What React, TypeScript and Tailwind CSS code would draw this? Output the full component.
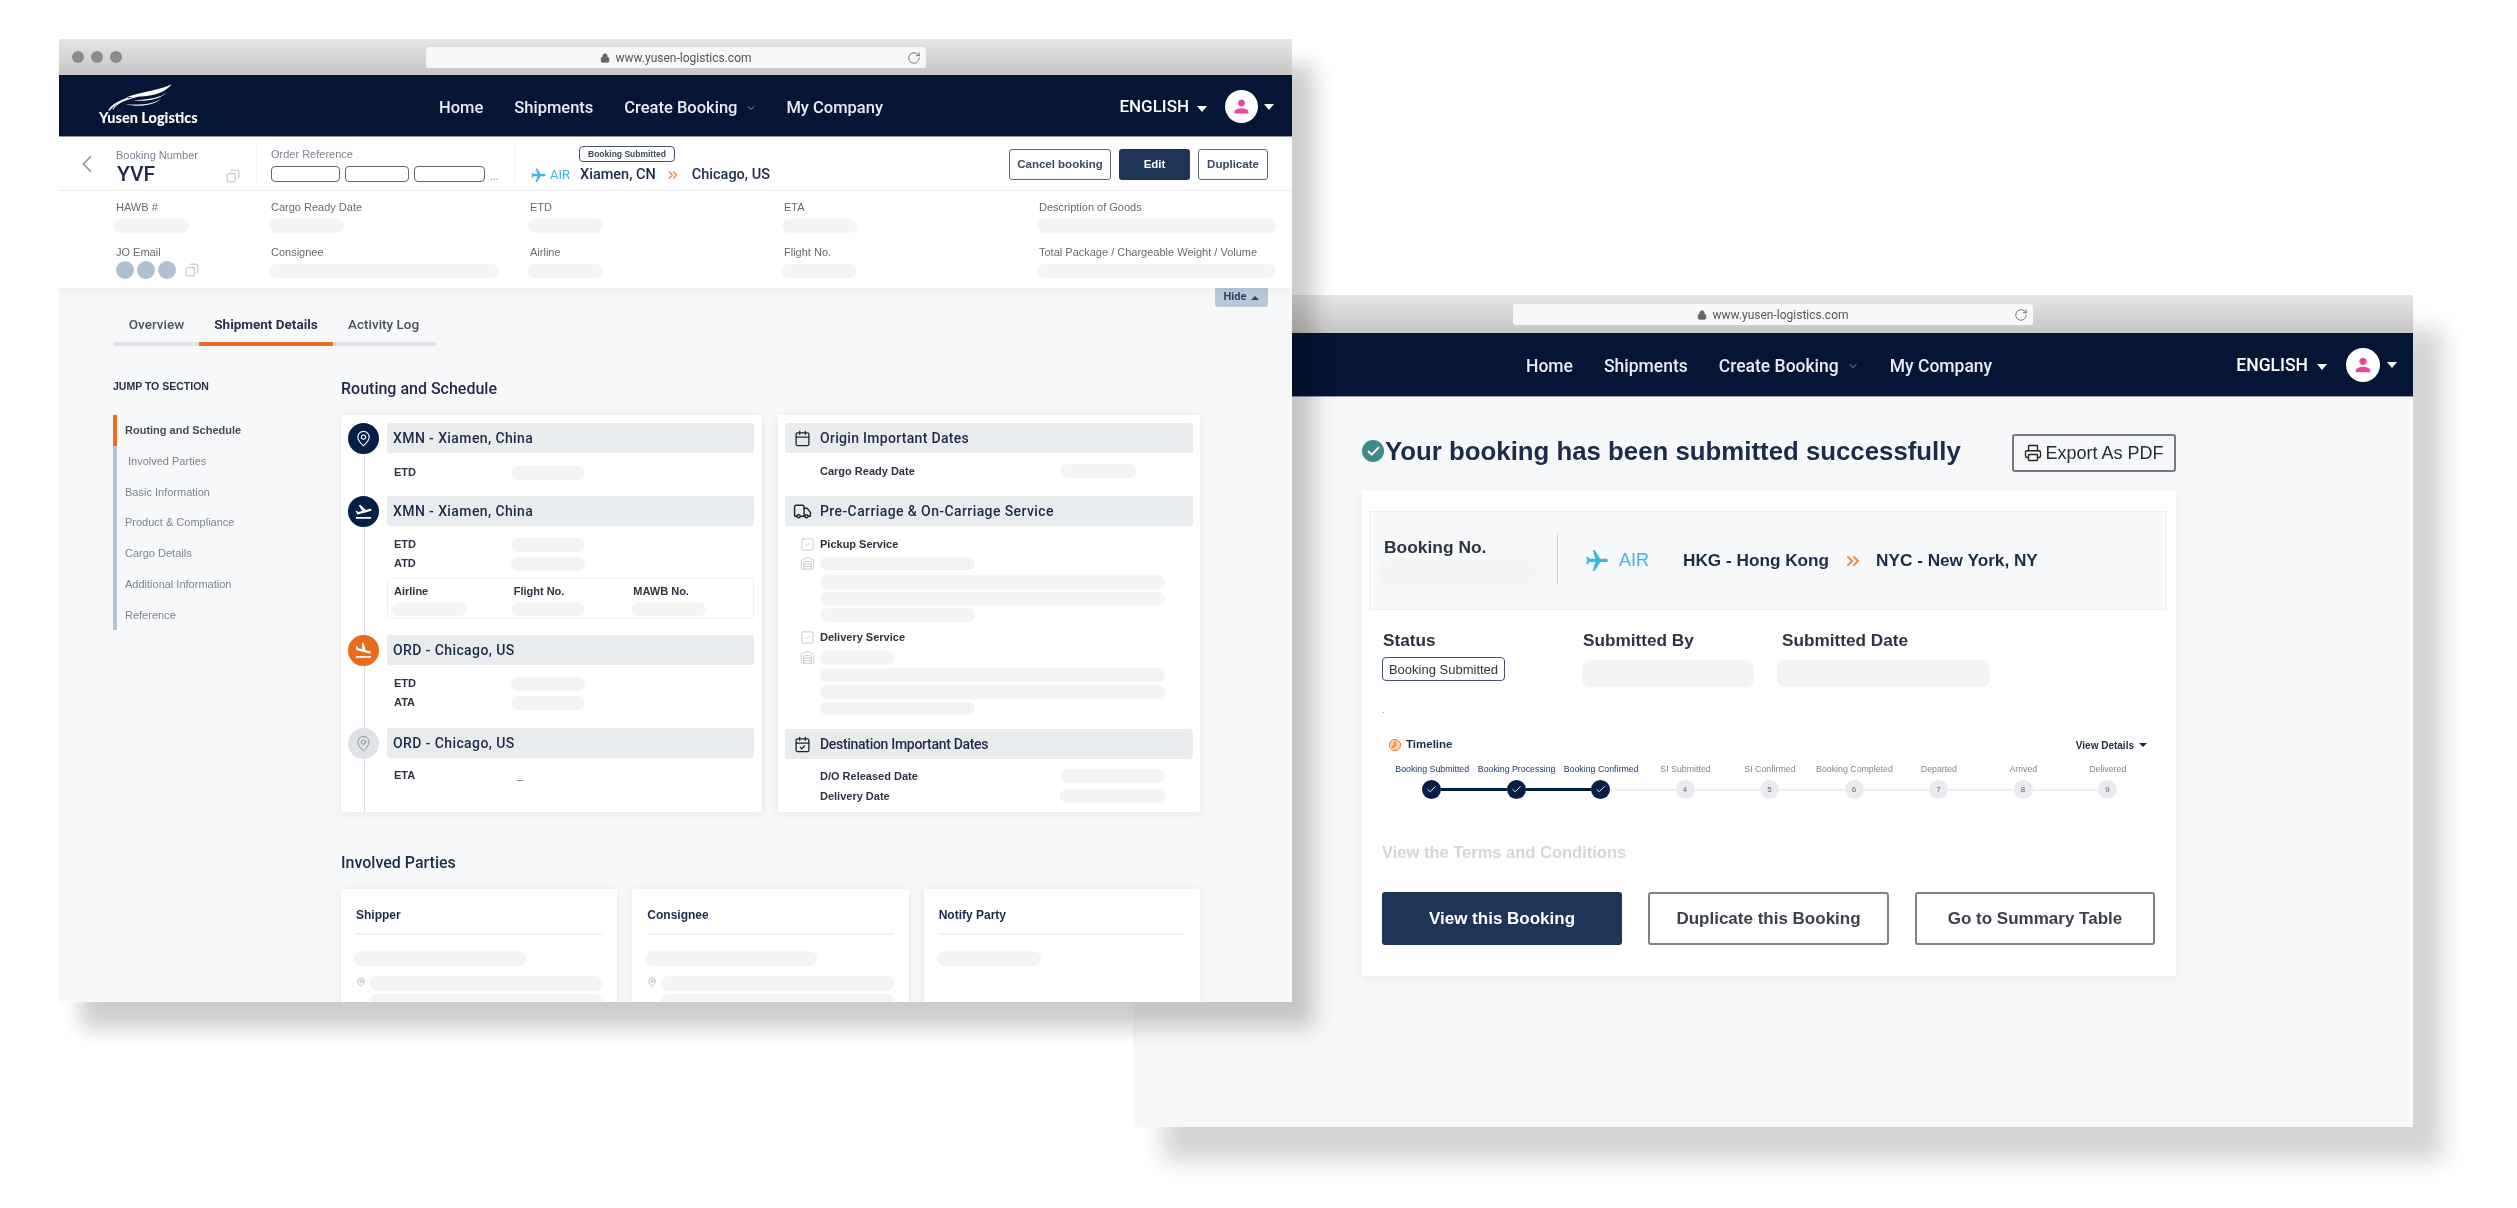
import React from "react";
import { ChevronDown, ChevronLeft, ChevronsRight, Copy, Lock, RotateCw, MapPin, Calendar, CalendarCheck, Truck, SquareCheck, Warehouse, Printer, Check } from "lucide-react";
import { MdFlight, MdFlightLand, MdFlightTakeoff, MdPerson } from "react-icons/md";

const Skel = ({ className = "" }: { className?: string }) => <div className={"rounded-lg bg-[#f4f4f5] shrink-0 " + className} />;
const CaretW = () => <span className="inline-block w-0 h-0 border-x-[5px] border-x-transparent border-t-[6px] border-t-white" />;
const CaretD = ({ className = "" }: { className?: string }) => <span className={"inline-block w-0 h-0 border-x-[4px] border-x-transparent border-t-[4px] border-t-[#12264a] " + className} />;

function Chrome({ h, dots, ml, w }: { h: string; dots: boolean; ml: string; w: string }) {
  return (
    <div className={"flex items-center bg-gradient-to-b from-[#e6e6e4] to-[#c6c7c4] shrink-0 " + h}>
      {dots && (
        <div className="flex gap-[7px] pl-[13px]">
          <span className="w-3 h-3 rounded-full bg-[#8b8b8b]" />
          <span className="w-3 h-3 rounded-full bg-[#8b8b8b]" />
          <span className="w-3 h-3 rounded-full bg-[#8b8b8b]" />
        </div>
      )}
      <div className={"h-[21px] rounded-[3px] bg-[#f8f8f8] relative flex items-center justify-center gap-[5px] pt-[1px] text-[12px] text-[#555] font-['Roboto',sans-serif] " + ml + " " + w}>
        <Lock size={10} className="text-[#666] fill-[#666]" />
        <span>www.yusen-logistics.com</span>
        <RotateCw size={14} strokeWidth={1.3} className="absolute right-[5px] text-[#555]" />
      </div>
    </div>
  );
}

function Wing() {
  return (
    <svg viewBox="0 0 70 28" className="w-[68px] h-[27px] ml-[7px] block" fill="none" stroke="#fff" strokeLinecap="round">
      <path d="M68 0C58 6 36 8 20 14C30 13.5 42 13 50 11C58 9 64 5 68 0Z" fill="#fff" stroke="none" />
      <path d="M63 8C58 14 44 16 28 17C40 18 56 17 63 8Z" fill="#fff" stroke="none" />
      <path d="M57 15C50 21 34 22 20 21C32 24 50 23 57 15Z" fill="#e8ebf0" stroke="none" />
      <path d="M22 15C13 18 6 22 3 27" strokeWidth="1.6" />
      <path d="M32 13C20 16 10 20 7 26" strokeWidth="1.1" />
    </svg>
  );
}

function Window1Nav() {
  return (
    <div className="h-[62px] shrink-0 bg-[#051535] border-b border-[#8e98a8] flex items-center pl-[40px] pr-[18px] text-white font-['Roboto',sans-serif]">
      <div className="w-[101px] flex flex-col -mt-[2px]">
        <Wing />
        <div className="font-['Lato',sans-serif] font-black text-[14.5px] leading-[14px] whitespace-nowrap">Yusen Logistics</div>
      </div>
      <div className="flex items-center ml-[239px] text-[16.5px] font-medium text-[#e9ecf1] mt-[5px]">
        <span>Home</span>
        <span className="ml-[31px]">Shipments</span>
        <span className="ml-[31px]">Create Booking</span>
        <ChevronDown size={12} strokeWidth={1.4} className="ml-[8px] text-[#c4c9d4]" />
        <span className="ml-[29px]">My Company</span>
      </div>
      <div className="ml-auto flex items-center mt-[2px]">
        <span className="text-[17px] font-medium">ENGLISH</span>
        <span className="ml-[8px]"><CaretW /></span>
        <div className="ml-[18px] w-[33px] h-[33px] rounded-full bg-white flex items-center justify-center">
          <MdPerson size={21} className="text-[#ec4899]" />
        </div>
        <span className="ml-[6px] -mt-[4px]"><CaretW /></span>
      </div>
    </div>
  );
}

function SubHeader() {
  return (
    <div className="h-[54px] shrink-0 bg-white border-b border-[#eeeeee] flex font-['Liberation_Sans',sans-serif]">
      <div className="w-[57px] flex items-center justify-end pr-[14px]">
        <ChevronLeft size={30} strokeWidth={1.3} className="text-[#8490a0]" />
      </div>
      <div className="w-[141px] relative my-[8px] border-r border-[#f1f1f1]">
        <div className="text-[11px] leading-[14px] text-[#7a8290] mt-[3px]">Booking Number</div>
        <div className="text-[21px] leading-[24px] font-['Roboto',sans-serif] font-medium text-[#1c2b4a] pl-[1px]">YVF</div>
        <Copy size={14} strokeWidth={1} className="absolute left-[110px] top-[24px] text-[#8a8f98] -scale-x-100" />
      </div>
      <div className="w-[258px] pl-[14px] my-[8px] border-r border-[#f1f1f1]">
        <div className="text-[11px] leading-[14px] text-[#7a8290] mt-[2px]">Order Reference</div>
        <div className="flex gap-[5px] mt-[5px] items-end">
          <div className="w-[69px] h-[16px] rounded-[4px] border border-[#5f6771]" />
          <div className="w-[64px] h-[16px] rounded-[4px] border border-[#5f6771]" />
          <div className="w-[71px] h-[16px] rounded-[4px] border border-[#5f6771]" />
          <span className="text-[10px] leading-[10px] text-[#8a8f98]">...</span>
        </div>
      </div>
      <div className="pl-[15px] flex flex-col">
        <div className="ml-[49px] mt-[9px] w-[96px] h-[16px] rounded-[4px] border border-[#43546e] flex items-center justify-center text-[8.5px] font-bold text-[#3a4a62]">Booking Submitted</div>
        <div className="flex items-center mt-[3px] h-[20px] font-['Roboto',sans-serif]">
          <MdFlight size={17} className="rotate-90 text-[#39b7e8]" />
          <span className="ml-[3px] text-[13px] text-[#39b7e8]">AIR</span>
          <span className="ml-[10px] text-[14.5px] font-medium text-[#1c2b4a] whitespace-nowrap">Xiamen, CN</span>
          <ChevronsRight size={14} strokeWidth={2.6} className="ml-[10px] text-[#f08a3c]" />
          <span className="ml-[12px] text-[14.5px] font-medium text-[#1c2b4a] whitespace-nowrap">Chicago, US</span>
        </div>
      </div>
      <div className="ml-auto pr-[24px] flex gap-[8px] items-start pt-[12px] text-[11.5px] font-bold">
        <div className="w-[102px] h-[31px] rounded-[3px] border border-[#5f6c7d] flex items-center justify-center text-[#3a4a62]">Cancel booking</div>
        <div className="w-[71px] h-[31px] rounded-[3px] bg-[#1e3557] flex items-center justify-center text-white">Edit</div>
        <div className="w-[70px] h-[31px] rounded-[3px] border border-[#5f6c7d] flex items-center justify-center text-[#3a4a62]">Duplicate</div>
      </div>
    </div>
  );
}

const Field = ({ label, skel }: { label: string; skel: string }) => (
  <div>
    <div className="text-[11px] leading-[14px] text-[#666b73]">{label}</div>
    <Skel className={"h-[14px] mt-[5px] -ml-[2px] " + skel} />
  </div>
);

function Details() {
  return (
    <div className="h-[97px] shrink-0 bg-white pl-[57px] pt-[9px] grid grid-cols-[155px_259px_254px_255px_239px] auto-rows-[45px] shadow-[0_3px_8px_rgba(0,0,0,0.05)] relative font-['Liberation_Sans',sans-serif]">
      <Field label="HAWB #" skel="w-[75px]" />
      <Field label="Cargo Ready Date" skel="w-[75px]" />
      <Field label="ETD" skel="w-[75px]" />
      <Field label="ETA" skel="w-[75px]" />
      <Field label="Description of Goods" skel="w-[239px]" />
      <div className="relative">
        <div className="text-[11px] leading-[14px] text-[#666b73]">JO Email</div>
        <div className="flex items-center gap-[3px] mt-[2px]">
          <span className="w-[18px] h-[18px] rounded-full bg-[#afc0d2]" />
          <span className="w-[18px] h-[18px] rounded-full bg-[#afc0d2]" />
          <span className="w-[18px] h-[18px] rounded-full bg-[#afc0d2]" />
          <Copy size={14} strokeWidth={1} className="ml-[6px] text-[#8a8f98] -scale-x-100" />
        </div>
      </div>
      <Field label="Consignee" skel="w-[230px]" />
      <Field label="Airline" skel="w-[75px]" />
      <Field label="Flight No." skel="w-[75px]" />
      <Field label="Total Package / Chargeable Weight / Volume" skel="w-[239px]" />
    </div>
  );
}

function Tabs() {
  return (
    <div className="ml-[55px] w-[322px] h-[39px] border-b-4 border-[#dfe2e6] flex text-[13.5px] font-medium font-['Roboto',sans-serif]">
      <div className="w-[85px] h-[35px] flex items-center justify-center text-[#4a5260]">Overview</div>
      <div className="w-[134px] h-[39px] border-b-4 border-[#ee6c1f] flex items-center justify-center font-bold text-[#28324a]">Shipment Details</div>
      <div className="pl-[15px] h-[35px] flex items-center text-[#4a5260]">Activity Log</div>
    </div>
  );
}

function Sidebar() {
  const items = ["Involved Parties", "Basic Information", "Product & Compliance", "Cargo Details", "Additional Information", "Reference"];
  return (
    <div className="w-[228px] ml-[54px] shrink-0 pt-[33px] font-['Liberation_Sans',sans-serif]">
      <div className="text-[10.5px] leading-[14px] font-bold text-[#28324a]">JUMP TO SECTION</div>
      <div className="mt-[22px]">
        <div className="h-[31px] border-l-4 border-[#ee6c1f] pl-[8px] flex items-center text-[11px] font-bold text-[#444b57]">Routing and Schedule</div>
        {items.map((t, i) => (
          <div key={t} className={"h-[30.7px] border-l-4 border-[#b3c2d6] flex items-center text-[11px] text-[#7c8390] " + (i === 0 ? "pl-[11px]" : "pl-[8px]")}>{t}</div>
        ))}
      </div>
    </div>
  );
}

const Bar = ({ children }: { children: React.ReactNode }) => (
  <div className="h-[30px] rounded-[3px] bg-[#e9ecef] flex items-center text-[14px] font-medium tracking-[0.4px] text-[#1c2b4a] font-['Roboto',sans-serif]">{children}</div>
);

const Circle = ({ bg, children }: { bg: string; children: React.ReactNode }) => (
  <div className={"w-[31px] h-[31px] rounded-full flex items-center justify-center shrink-0 relative " + bg}>{children}</div>
);

const Row = ({ label, children }: { label: string; children?: React.ReactNode }) => (
  <div className="h-[19px] flex items-center pl-[46px] text-[11px] font-bold text-[#2b3442]">
    <div className="w-[117px]">{label}</div>
    {children ?? <Skel className="w-[74px] h-[14px]" />}
  </div>
);

function Head({ icon, title }: { icon: React.ReactNode; title: string }) {
  return (
    <div className="flex gap-[8px] relative">
      {icon}
      <div className="flex-1"><Bar><span className="pl-[6px]">{title}</span></Bar></div>
    </div>
  );
}

function RoutingCard() {
  return (
    <div className="h-[397px] bg-white shadow-[0_1px_8px_rgba(0,0,0,0.08)] relative pt-[8px] px-[7px] pr-[8px] font-['Liberation_Sans',sans-serif]">
      <div className="absolute left-[23px] top-[15px] bottom-0 w-px bg-[#d9dde3]" />
      <Head title="XMN - Xiamen, China" icon={<Circle bg="bg-[#051e45]"><MapPin size={17} strokeWidth={1.6} className="text-white" /></Circle>} />
      <div className="mt-[9px]"><Row label="ETD" /></div>
      <div className="mt-[14px]">
        <Head title="XMN - Xiamen, China" icon={<Circle bg="bg-[#051e45]"><MdFlightTakeoff size={19} className="text-white" /></Circle>} />
      </div>
      <div className="mt-[8px]"><Row label="ETD" /><Row label="ATD" /></div>
      <div className="ml-[39px] mt-[5px] h-[41px] rounded-[3px] border border-[#eef0f2] bg-white relative grid grid-cols-3 pl-[6px] pt-[4px] text-[11px] font-bold text-[#2b3442]">
        <div>Airline<Skel className="w-[75px] h-[13px] mt-[3px] -ml-[2px]" /></div>
        <div>Flight No.<Skel className="w-[74px] h-[13px] mt-[3px] -ml-[3px]" /></div>
        <div>MAWB No.<Skel className="w-[75px] h-[13px] mt-[3px] -ml-[2px]" /></div>
      </div>
      <div className="mt-[16px]">
        <Head title="ORD - Chicago, US" icon={<Circle bg="bg-[#ea6a1c]"><MdFlightLand size={19} className="text-white" /></Circle>} />
      </div>
      <div className="mt-[8px]"><Row label="ETD" /><Row label="ATA" /></div>
      <div className="mt-[16px]">
        <Head title="ORD - Chicago, US" icon={<Circle bg="bg-[#dfe3e8]"><MapPin size={17} strokeWidth={1.2} className="text-[#7d8794]" /></Circle>} />
      </div>
      <div className="mt-[7px]"><Row label="ETA"><span className="ml-[6px] mt-[8px] font-normal text-[#666]">–</span></Row></div>
    </div>
  );
}

function ServiceIconRow({ icon, children }: { icon: React.ReactNode; children: React.ReactNode }) {
  return (
    <div className="flex items-center">
      <div className="w-[35px] flex justify-end pr-[5px] shrink-0">{icon}</div>
      {children}
    </div>
  );
}

function DatesCard() {
  const head = (icon: React.ReactNode, title: string, cls = "") => (
    <Bar>
      <span className="w-[35px] flex justify-center shrink-0">{icon}</span>
      <span className={cls}>{title}</span>
    </Bar>
  );
  const dr = (label: string, skel: string) => (
    <div className="h-[18px] flex items-center pl-[35px] text-[11px] font-bold text-[#2b3442]">
      <div className="w-[240px]">{label}</div>
      <Skel className={"h-[14px] " + skel} />
    </div>
  );
  const check = <SquareCheck size={15} strokeWidth={1.2} className="text-[#b4bdc8]" />;
  const house = <Warehouse size={15} strokeWidth={1.2} className="text-[#b4bdc8]" />;
  return (
    <div className="h-[397px] bg-white shadow-[0_1px_8px_rgba(0,0,0,0.08)] pt-[8px] px-[7px] font-['Liberation_Sans',sans-serif]">
      {head(<Calendar size={17} strokeWidth={1.8} className="text-[#222]" />, "Origin Important Dates", "tracking-[0.3px]")}
      <div className="mt-[9px]">{dr("Cargo Ready Date", "w-[76px]")}</div>
      <div className="mt-[16px]">{head(<Truck size={19} strokeWidth={1.8} className="text-[#222]" />, "Pre-Carriage & On-Carriage Service")}</div>
      <div className="mt-[9px]">
        <ServiceIconRow icon={check}><span className="text-[11px] leading-[18px] font-bold text-[#2b3442]">Pickup Service</span></ServiceIconRow>
        <div className="mt-[3px]"><ServiceIconRow icon={house}><Skel className="w-[155px] h-[13px]" /></ServiceIconRow></div>
        <div className="pl-[35px] flex flex-col gap-[3px] mt-[4px]">
          <Skel className="w-[345px] h-[14px]" />
          <Skel className="w-[345px] h-[13px]" />
          <Skel className="w-[155px] h-[14px]" />
        </div>
        <div className="mt-[6px]"><ServiceIconRow icon={check}><span className="text-[11px] leading-[18px] font-bold text-[#2b3442]">Delivery Service</span></ServiceIconRow></div>
        <div className="mt-[4px]"><ServiceIconRow icon={house}><Skel className="w-[74px] h-[14px]" /></ServiceIconRow></div>
        <div className="pl-[35px] flex flex-col gap-[3px] mt-[3px]">
          <Skel className="w-[345px] h-[14px]" />
          <Skel className="w-[345px] h-[14px]" />
          <Skel className="w-[155px] h-[13px]" />
        </div>
      </div>
      <div className="mt-[14px]">{head(<CalendarCheck size={17} strokeWidth={1.8} className="text-[#222]" />, "Destination Important Dates", "tracking-[-0.3px]")}</div>
      <div className="mt-[8px]">{dr("D/O Released Date", "w-[105px]")}</div>
      <div className="mt-[2px]">{dr("Delivery Date", "w-[105px]")}</div>
    </div>
  );
}

function Party({ title, w, pin }: { title: string; w: string; pin: boolean }) {
  return (
    <div className="h-[140px] bg-white rounded-[3px] shadow-[0_1px_8px_rgba(0,0,0,0.07)] px-[15px] pt-[19px] font-['Liberation_Sans',sans-serif]">
      <div className="text-[12px] leading-[14px] font-bold text-[#1c2b4a]">{title}</div>
      <div className="h-[2px] bg-[#f0f1f3] mt-[11px]" />
      <Skel className={"h-[15px] mt-[16px] -ml-[2px] " + w} />
      {pin && (
        <div className="flex gap-[4px] mt-[10px]">
          <MapPin size={10} strokeWidth={1.4} className="text-[#8a9bb0] mt-[1px] shrink-0" />
          <div className="flex-1 flex flex-col gap-[3px]">
            <Skel className="h-[15px]" />
            <Skel className="h-[15px]" />
          </div>
        </div>
      )}
    </div>
  );
}

function WindowOne() {
  return (
    <div className="absolute left-[59px] top-[39px] w-[1233px] h-[963px] z-10 overflow-hidden flex flex-col bg-[#f7f8fa] shadow-[22px_26px_20px_rgba(0,0,0,0.2)]">
      <Chrome h="h-[36px]" dots ml="ml-[304px]" w="w-[500px]" />
      <Window1Nav />
      <SubHeader />
      <Details />
      <div className="flex justify-end pr-[24px] h-[19px] shrink-0">
        <div className="w-[53px] h-[19px] rounded-b-[3px] bg-[#b8c8d8] flex items-center justify-center gap-[5px] text-[11px] font-bold text-[#33445e] font-['Roboto',sans-serif]">Hide <span className="w-0 h-0 border-x-[4px] border-x-transparent border-b-[4px] border-b-[#33445e]" /></div>
      </div>
      <Tabs />
      <div className="flex">
        <Sidebar />
        <div className="w-[859px] pt-[32px]">
          <div className="h-[22px] flex items-center text-[16px] font-medium text-[#1c2b4a] font-['Roboto',sans-serif]">Routing and Schedule</div>
          <div className="grid grid-cols-[421px_422px] gap-[16px] mt-[15px]">
            <RoutingCard />
            <DatesCard />
          </div>
          <div className="h-[22px] mt-[40px] flex items-center text-[16px] font-medium text-[#1c2b4a] font-['Roboto',sans-serif]">Involved Parties</div>
          <div className="grid grid-cols-3 gap-[15px] mt-[15px]">
            <Party title="Shipper" w="w-[172px]" pin />
            <Party title="Consignee" w="w-[172px]" pin />
            <Party title="Notify Party" w="w-[104px]" pin={false} />
          </div>
        </div>
      </div>
    </div>
  );
}

function Timeline() {
  const labels = ["Booking Submitted", "Booking Processing", "Booking Confirmed", "SI Submitted", "SI Confirmed", "Booking Completed", "Departed", "Arrived", "Delivered"];
  return (
    <div>
      <div className="ml-[21px] w-[760px] grid grid-cols-9 mt-[10px]">
        {labels.map((l, i) => (
          <div key={l} className={"text-center text-[8.8px] leading-[12px] whitespace-nowrap font-['Liberation_Sans',sans-serif] " + (i < 3 ? "text-[#1e3a66] font-medium" : "text-[#7c8390]")}>{l}</div>
        ))}
      </div>
      <div className="ml-[53px] w-[695px] flex items-center mt-[5px]">
        {labels.map((l, i) => (
          <React.Fragment key={l}>
            {i < 3 ? (
              <span className="w-[19px] h-[19px] rounded-full bg-[#051e45] flex items-center justify-center shrink-0"><Check size={11} strokeWidth={2} className="text-white" /></span>
            ) : (
              <span className="w-[19px] h-[19px] rounded-full bg-[#e9ebee] flex items-center justify-center shrink-0 text-[8px] text-[#666]">{i + 1}</span>
            )}
            {i < 8 && <span className={"flex-1 " + (i < 2 ? "h-[3px] bg-[#051e45]" : "h-[2px] bg-[#eceef1]")} />}
          </React.Fragment>
        ))}
      </div>
    </div>
  );
}

function WindowTwo() {
  return (
    <div className="absolute left-[1133px] top-[295px] w-[1280px] h-[832px] overflow-hidden flex flex-col bg-[#f7f8fa] shadow-[30px_34px_22px_rgba(0,0,0,0.17)] font-['Liberation_Sans',sans-serif]">
      <Chrome h="h-[38px]" dots={false} ml="ml-[380px]" w="w-[520px]" />
      <div className="h-[64px] shrink-0 bg-[#051535] border-b border-[#8e98a8] flex items-center pr-[16px] text-white font-['Roboto',sans-serif]">
        <div className="flex items-center ml-[393px] text-[17.5px] font-medium text-[#e9ecf1] mt-[3px]">
          <span>Home</span>
          <span className="ml-[31px]">Shipments</span>
          <span className="ml-[31px]">Create Booking</span>
          <ChevronDown size={12} strokeWidth={1.4} className="ml-[8px] text-[#c4c9d4]" />
          <span className="ml-[31px]">My Company</span>
        </div>
        <div className="ml-auto flex items-center mt-[1px]">
          <span className="text-[17.5px] font-medium">ENGLISH</span>
          <span className="ml-[9px]"><CaretW /></span>
          <div className="ml-[19px] w-[34px] h-[34px] rounded-full bg-white flex items-center justify-center">
            <MdPerson size={22} className="text-[#ec4899]" />
          </div>
          <span className="ml-[7px] -mt-[4px]"><CaretW /></span>
        </div>
      </div>
      <div className="pl-[229px] w-[1043px] pt-[37px]">
        <div className="flex justify-between items-start h-[38px]">
          <div className="flex items-center h-[34px] text-[#1c2b4a]">
            <span className="w-[22px] h-[22px] rounded-full bg-[#3f8a8a] flex items-center justify-center"><Check size={15} strokeWidth={3} className="text-white" /></span>
            <span className="ml-[1px] text-[25.8px] font-bold whitespace-nowrap">Your booking has been submitted successfully</span>
          </div>
          <div className="w-[164px] h-[38px] rounded-[3px] border-2 border-[#767b82] flex items-center justify-center gap-[3px] text-[18px] text-[#262d38]">
            <Printer size={18} strokeWidth={1.8} className="text-[#222]" />Export As PDF
          </div>
        </div>
        <div className="mt-[18px] h-[486px] bg-white shadow-[0_3px_10px_rgba(0,0,0,0.06)] pt-[21px] pl-[7px] pr-[8px]">
          <div className="h-[99px] w-[798px] border border-[#eeeeee] bg-[#f7f8fa] flex items-start font-medium">
            <div className="w-[187px] pl-[14px] pt-[25px] shrink-0">
              <div className="text-[17.4px] leading-[20px] font-bold text-[#2b3442]">Booking No.</div>
              <Skel className="w-[155px] h-[25px] mt-[3px] -ml-[3px] rounded-[10px] bg-[#f2f2f3]" />
            </div>
            <div className="w-px h-[51px] mt-[22px] bg-[#cfd3d8]" />
            <div className="h-[97px] flex items-center ml-[26px] text-[17.2px] font-bold text-[#1c2b4a]">
              <MdFlight size={26} className="rotate-90 text-[#39b7e8]" />
              <span className="ml-[9px] text-[18px] font-normal text-[#39b7e8]">AIR</span>
              <span className="ml-[34px] whitespace-nowrap">HKG - Hong Kong</span>
              <ChevronsRight size={20} strokeWidth={2.4} className="ml-[14px] text-[#f08a3c]" />
              <span className="ml-[13px] whitespace-nowrap">NYC - New York, NY</span>
            </div>
          </div>
          <div className="pl-[14px] mt-[20px] grid grid-cols-[200px_199px_1fr] text-[17.2px] leading-[20px] font-bold text-[#2b3442]">
            <div>
              Status
              <div className="mt-[7px] -ml-[1px] w-[123px] h-[24px] rounded-[4px] border border-[#43546e] flex items-center justify-center text-[13px] font-normal leading-none text-[#2b3442]">Booking Submitted</div>
            </div>
            <div>
              Submitted By
              <Skel className="w-[172px] h-[27px] mt-[10px] -ml-[1px] rounded-[12px]" />
            </div>
            <div>
              Submitted Date
              <Skel className="w-[213px] h-[27px] mt-[10px] -ml-[5px] rounded-[12px]" />
            </div>
          </div>
          <div className="pl-[13px] mt-[17px] h-[12px] text-[10px] leading-[12px] text-[#999]">.</div>
          <div className="mt-[21px] h-[16px] flex items-center pl-[20px] pr-[21px] font-bold text-[#1c2b4a]">
            <svg viewBox="0 0 12 12" className="w-[12px] h-[14px]"><circle cx="6" cy="6" r="5.6" fill="#fbd3ac" stroke="#ef7b2a" strokeWidth="1" /><path d="M6 2.5V6.5L3 8.5" stroke="#ef7b2a" strokeWidth="1.6" fill="none" /></svg>
            <span className="ml-[5px] text-[11.5px]">Timeline</span>
            <span className="ml-auto text-[10px]">View Details</span>
            <CaretD className="ml-[5px]" />
          </div>
          <Timeline />
          <div className="pl-[13px] mt-[43px] text-[16.5px] leading-[20px] font-bold text-[#d6d6d8]">View the Terms and Conditions</div>
          <div className="pl-[13px] mt-[30px] flex gap-[26px] text-[17px] font-bold">
            <div className="w-[240px] h-[53px] rounded-[3px] bg-[#1e3557] text-white flex items-center justify-center">View this Booking</div>
            <div className="w-[241px] h-[53px] rounded-[3px] border-2 border-[#7d8288] text-[#3a414d] flex items-center justify-center">Duplicate this Booking</div>
            <div className="w-[240px] h-[53px] rounded-[3px] border-2 border-[#7d8288] text-[#3a414d] flex items-center justify-center">Go to Summary Table</div>
          </div>
        </div>
      </div>
    </div>
  );
}

export default function App() {
  return (
    <div className="relative w-[2517px] h-[1208px] bg-white overflow-hidden blur-[0.4px]">
      <WindowTwo />
      <WindowOne />
    </div>
  );
}
